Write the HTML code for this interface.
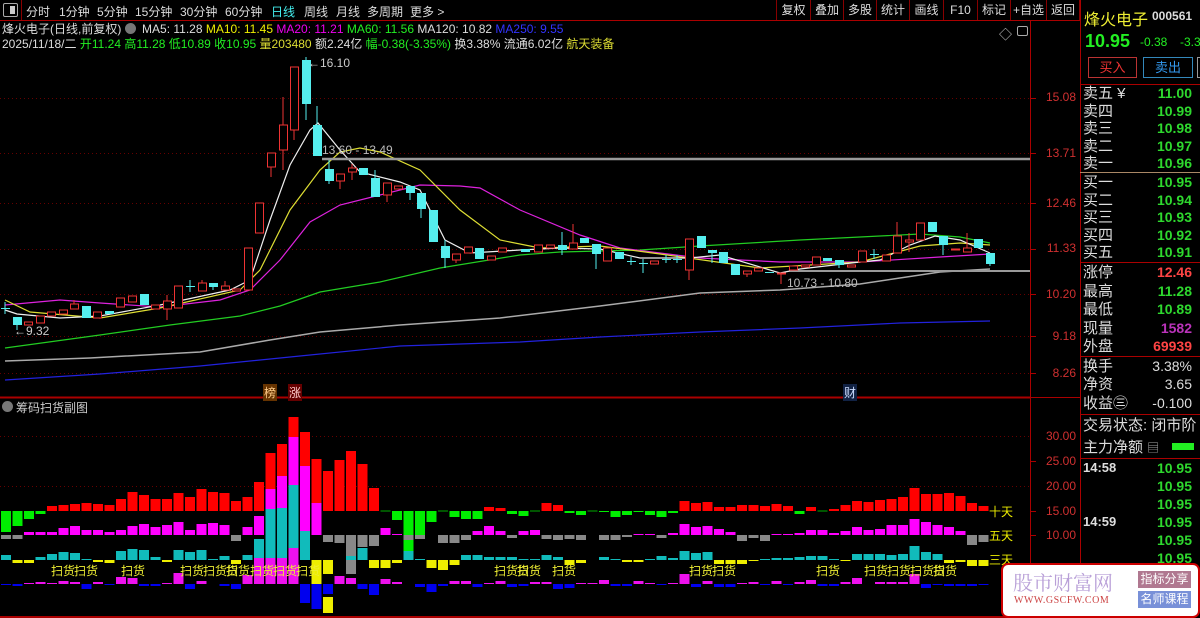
<!DOCTYPE html>
<html><head><meta charset="utf-8">
<style>
*{margin:0;padding:0;box-sizing:border-box}
body{width:1200px;height:618px;background:#000;overflow:hidden;position:relative;font-family:"Liberation Sans","Noto Sans CJK SC",sans-serif;color:#ddd}
.a{position:absolute;white-space:nowrap}
.tb{font-size:12px;color:#ddd;top:3px}
.rb{position:absolute;top:0;height:20px;border-left:1px solid #800;font-size:12px;color:#ddd;text-align:center;line-height:21px}
.rl{position:absolute;left:1083px;font-size:15px;color:#ddd;line-height:17px}
.rv{position:absolute;right:8px;font-size:14px;font-weight:bold;color:#2ed82e;line-height:17px;font-family:"Liberation Sans",sans-serif}
.ax{position:absolute;left:1040px;font-size:12px;color:#d03030;width:36px;text-align:right}
</style></head><body>
<svg id="s" width="1200" height="618" style="position:absolute;left:0;top:0"></svg>

<div class="a" style="left:3px;top:3px;width:15px;height:14px;border:1px solid #aaa;border-radius:2px"></div>
<div class="a" style="left:10px;top:6px;width:5px;height:8px;background:#ccc"></div>
<div class="a" style="left:21px;top:0;width:1px;height:20px;background:#800"></div>
<div class="a tb" style="left:26px">分时</div>
<div class="a tb" style="left:59px">1分钟</div>
<div class="a tb" style="left:97px">5分钟</div>
<div class="a tb" style="left:135px">15分钟</div>
<div class="a tb" style="left:180px">30分钟</div>
<div class="a tb" style="left:225px">60分钟</div>
<div class="a tb" style="left:271px;color:#4ee">日线</div>
<div class="a tb" style="left:304px">周线</div>
<div class="a tb" style="left:336px">月线</div>
<div class="a tb" style="left:367px">多周期</div>
<div class="a tb" style="left:410px">更多 &gt;</div>
<div class="rb" style="left:776px;width:34px">复权</div>
<div class="rb" style="left:810px;width:33px">叠加</div>
<div class="rb" style="left:843px;width:33px">多股</div>
<div class="rb" style="left:876px;width:33px">统计</div>
<div class="rb" style="left:909px;width:34px">画线</div>
<div class="rb" style="left:943px;width:34px">F10</div>
<div class="rb" style="left:977px;width:33px">标记</div>
<div class="rb" style="left:1010px;width:36px">+自选</div>
<div class="rb" style="left:1046px;width:34px;border-right:1px solid #800">返回</div>

<div class="a" style="left:2px;top:22px;font-size:12px;line-height:15px">
<span style="color:#ddd">烽火电子(日线,前复权)</span> <span style="display:inline-block;width:11px;height:11px;border-radius:6px;background:#777;vertical-align:-1px"></span>
<span style="color:#ddd;margin-left:3px">MA5: 11.28</span> <span style="color:#ee0">MA10: 11.45</span> <span style="color:#e0e">MA20: 11.21</span> <span style="color:#2e2">MA60: 11.56</span> <span style="color:#ddd">MA120: 10.82</span> <span style="color:#33f">MA250: 9.55</span></div>
<div class="a" style="left:2px;top:37px;font-size:12px;line-height:15px">
<span style="color:#ddd">2025/11/18/二</span> <span style="color:#2e2">开11.24 高11.28 低10.89 收10.95</span> <span style="color:#dd3">量203480</span> <span style="color:#ddd">额2.24亿</span> <span style="color:#2e2">幅-0.38(-3.35%)</span> <span style="color:#ddd">换3.38% 流通6.02亿</span> <span style="color:#dd3">航天装备</span></div>
<div class="a" style="left:999px;top:24px;font-size:13px;color:#ccc">◇</div>
<div class="a" style="left:1017px;top:26px;width:11px;height:10px;border:1px solid #aaa;border-radius:2px"></div>

<div class="a" style="left:322px;top:143px;font-size:12px;color:#bbb">13.60 - 13.49</div>
<div class="a" style="left:787px;top:276px;font-size:12px;color:#bbb">10.73 - 10.80</div>
<div class="a" style="left:308px;top:56px;font-size:12px;color:#ccc">←16.10</div>
<div class="a" style="left:14px;top:324px;font-size:12px;color:#ccc">←9.32</div>
<div class="a" style="left:263px;top:384px;font-size:12px;color:#fc8;background:#630;padding:0 1px">榜</div>
<div class="a" style="left:288px;top:384px;font-size:12px;color:#fcc;background:#600;padding:0 1px">涨</div>
<div class="a" style="left:843px;top:384px;font-size:12px;color:#cdf;background:#124;padding:0 1px">财</div>

<div class="ax" style="top:90px">15.08</div>
<div class="ax" style="top:146px">13.71</div>
<div class="ax" style="top:196px">12.46</div>
<div class="ax" style="top:241px">11.33</div>
<div class="ax" style="top:287px">10.20</div>
<div class="ax" style="top:329px">9.18</div>
<div class="ax" style="top:366px">8.26</div>
<div class="ax" style="top:429px">30.00</div>
<div class="ax" style="top:454px">25.00</div>
<div class="ax" style="top:479px">20.00</div>
<div class="ax" style="top:504px">15.00</div>
<div class="ax" style="top:528px">10.00</div>

<div class="a" style="left:2px;top:401px;width:11px;height:11px;border-radius:6px;background:#777"></div>
<div class="a" style="left:16px;top:399px;font-size:12px;color:#ccc">筹码扫货副图</div>
<div class="a" style="left:989px;top:503px;font-size:12px;color:#ee0">十天</div>
<div class="a" style="left:989px;top:527px;font-size:12px;color:#ee0">五天</div>
<div class="a" style="left:989px;top:551px;font-size:12px;color:#ee0">三天</div>

<div id="lab"></div>

<div class="a" style="left:1084px;top:6px;font-size:16px;color:#ee3">烽火电子</div>
<div class="a" style="left:1152px;top:9px;font-size:12px;color:#ddd;font-weight:bold">000561</div>
<div class="a" style="left:1085px;top:31px;font-size:18px;color:#2e2;font-weight:bold">10.95</div>
<div class="a" style="left:1140px;top:35px;font-size:12px;color:#2e2">-0.38</div>
<div class="a" style="left:1180px;top:35px;font-size:12px;color:#2e2">-3.3</div>
<div class="a" style="left:1088px;top:57px;width:49px;height:21px;border:1px solid #b33;color:#e33;font-size:13px;text-align:center;line-height:19px">买入</div>
<div class="a" style="left:1143px;top:57px;width:50px;height:21px;border:1px solid #38b;color:#39e;font-size:13px;text-align:center;line-height:19px">卖出</div>
<div class="a" style="left:1197px;top:57px;width:5px;height:21px;border:1px solid #999"></div>

<div class="rl" style="top:85px">卖五 ¥</div><div class="rv" style="top:85px">11.00</div>
<div class="rl" style="top:103px">卖四</div><div class="rv" style="top:103px">10.99</div>
<div class="rl" style="top:120px">卖三</div><div class="rv" style="top:120px">10.98</div>
<div class="rl" style="top:138px">卖二</div><div class="rv" style="top:138px">10.97</div>
<div class="rl" style="top:155px">卖一</div><div class="rv" style="top:155px">10.96</div>
<div class="rl" style="top:174px">买一</div><div class="rv" style="top:174px">10.95</div>
<div class="rl" style="top:192px">买二</div><div class="rv" style="top:192px">10.94</div>
<div class="rl" style="top:209px">买三</div><div class="rv" style="top:209px">10.93</div>
<div class="rl" style="top:227px">买四</div><div class="rv" style="top:227px">10.92</div>
<div class="rl" style="top:244px">买五</div><div class="rv" style="top:244px">10.91</div>
<div class="rl" style="top:264px">涨停</div><div class="rv" style="top:264px;color:#f44">12.46</div>
<div class="rl" style="top:283px">最高</div><div class="rv" style="top:283px">11.28</div>
<div class="rl" style="top:301px">最低</div><div class="rv" style="top:301px">10.89</div>
<div class="rl" style="top:320px">现量</div><div class="rv" style="top:320px;color:#b3b">1582</div>
<div class="rl" style="top:338px">外盘</div><div class="rv" style="top:338px;color:#f44">69939</div>
<div class="rl" style="top:358px">换手</div><div class="rv" style="top:358px;color:#ddd;font-weight:normal">3.38%</div>
<div class="rl" style="top:376px">净资</div><div class="rv" style="top:376px;color:#ddd;font-weight:normal">3.65</div>
<div class="rl" style="top:395px">收益㊂</div><div class="rv" style="top:395px;color:#ddd;font-weight:normal">-0.100</div>
<div class="rl" style="top:417px">交易状态: 闭市阶</div>
<div class="rl" style="top:439px">主力净额 <span style="font-size:12px;color:#aaa">▤</span></div>
<div class="a" style="left:1172px;top:443px;width:22px;height:7px;background:#2e2"></div>
<div class="a" style="left:1083px;top:460px;font-size:13px;font-weight:bold;color:#ddd">14:58</div>
<div class="a" style="left:1083px;top:514px;font-size:13px;font-weight:bold;color:#ddd">14:59</div>
<div class="rv" style="top:460px">10.95</div><div class="rv" style="top:478px">10.95</div><div class="rv" style="top:496px">10.95</div>
<div class="rv" style="top:514px">10.95</div><div class="rv" style="top:532px">10.95</div><div class="rv" style="top:550px">10.95</div>

<div class="a" style="left:1001px;top:563px;width:199px;height:55px;background:#fff;border:2px solid #c00;border-radius:7px"></div>
<div class="a" style="left:1013px;top:567px;font-size:20px;color:#b9a0d8;font-family:'Noto Serif CJK SC',serif">股市财富网</div>
<div class="a" style="left:1014px;top:595px;font-size:10px;color:#c44;font-family:'Liberation Serif',serif;letter-spacing:0.5px">WWW.GSCFW.COM</div>
<div class="a" style="left:1138px;top:571px;width:53px;height:17px;background:#b07890;color:#fff;font-size:12px;text-align:center;line-height:17px">指标分享</div>
<div class="a" style="left:1138px;top:591px;width:53px;height:17px;background:#7890d8;color:#fff;font-size:12px;text-align:center;line-height:17px">名师课程</div>

<script>
var s=document.getElementById('s'),h='';
function R(x,y,w,hh,f,st){if(hh<0){y+=hh;hh=-hh}h+='<rect x="'+x+'" y="'+y+'" width="'+w+'" height="'+hh+'" fill="'+f+'"'+(st?' stroke="'+st+'"':'')+'/>';}
function L(x1,y1,x2,y2,c,w,d){h+='<line x1="'+x1+'" y1="'+y1+'" x2="'+x2+'" y2="'+y2+'" stroke="'+c+'" stroke-width="'+(w||1)+'"'+(d?' stroke-dasharray="'+d+'"':'')+'/>';}
function P(pts,c,w){h+='<polyline fill="none" stroke="'+c+'" stroke-width="'+(w||1.2)+'" points="'+pts.map(function(p){return p.join(',')}).join(' ')+'"/>';}
L(0,20.5,1080,20.5,'#a00');L(1030.5,20,1030.5,618,'#a00');L(1080.5,0,1080.5,618,'#a00');
L(0,397.5,1030,397.5,'#a00',2);L(1030,397.5,1080,397.5,'#a00');L(0,617,1030,617,'#a00',2);
[84,172,262,356,414,458].forEach(function(y){L(1080,y+.5,1200,y+.5,y==172?'#a86':'#a00')});
[98,153,203,249,294,336,373].forEach(function(y){L(0,y+.5,1030,y+.5,'#600',1,'1,3');L(1030,y+.5,1036,y+.5,'#a00')});
[436,486].forEach(function(y){L(0,y+.5,1030,y+.5,'#600',1,'1,3')});
[461,511,535].forEach(function(y){L(1030,y+.5,1036,y+.5,'#a00')});
P([[5,380],[100,374],[200,366],[300,356],[400,346],[520,342],[600,337],[700,332],[800,328],[900,323],[990,321]],'#22d');
P([[5,361],[90,358],[200,352],[270,340],[320,332],[400,325],[500,318],[600,306],[700,293],[780,290],[860,284],[940,272],[990,269]],'#aaa',1.5);
P([[5,348],[100,335],[170,325],[240,316],[280,306],[320,292],[380,282],[440,268],[520,255],[560,252],[640,250],[700,246],[800,240],[920,234],[960,237],[990,243]],'#2c2');
P([[5,305],[60,300],[100,303],[160,307],[220,300],[250,290],[280,260],[310,222],[340,205],[380,195],[420,185],[460,186],[480,188],[520,210],[580,235],[620,248],[700,258],[780,262],[860,262],[940,257],[990,254]],'#d2d');
P([[5,300],[30,312],[100,318],[160,308],[240,290],[260,270],[290,210],[320,170],[340,152],[360,148],[380,152],[420,170],[460,210],[500,240],[540,248],[600,246],[660,254],[760,268],[860,262],[920,246],[960,243],[990,245]],'#dd3');
P([[5,310],[17,314],[60,318],[100,316],[160,305],[230,290],[250,280],[270,220],[290,165],[310,130],[318,123],[340,150],[360,172],[400,182],[420,190],[445,240],[470,253],[520,250],[560,248],[600,249],[640,258],[690,258],[720,255],[780,273],[800,269],[860,262],[880,260],[910,245],[935,236],[960,240],[990,253]],'#eee');
L(322,159,1030,159,'#999',2.5);L(790,271,1030,271,'#999',2);
var C=[[5,308,308,302,314,0],[17,317,325,317,330,0],[28,322,325,,,1],[40,316,323,,,1],[51,312,316,,,1],[63,310,314,,,1],[74,304,309,300,,1],[86,306,318,,,0],[97,312,318,,,1],[109,311,314,,,0],[120,298,307,,,1],[132,296,302,,,1],[144,294,305,,,0],[155,305,309,,,1],[167,301,309,295,320,1],[178,286,308,,,1],[190,286,286,280,292,0],[202,283,291,280,,1],[213,283,287,,290,0],[225,286,290,281,,1],[236,289,291,,,1],[248,248,290,,,1],[259,203,233,,,1],[271,153,167,,177,1],[283,125,150,97,170,1],[294,67,130,,140,1],[306,60,104,57,120,0],[317,125,156,106,,0],[329,169,181,160,184,0],[340,174,181,,189,1],[352,168,172,164,180,1],[363,168,175,,,0],[375,178,197,170,,0],[387,183,195,,202,1],[398,186,189,,,1],[410,186,193,,200,0],[421,193,209,,218,0],[433,210,242,,,0],[445,246,258,240,268,0],[456,254,260,,263,1],[468,247,253,,,1],[479,248,259,,,0],[491,256,260,,,1],[502,248,252,,,1],
[525,249,252,,,0],[538,245,252,,,1],[550,245,248,,,1],[562,245,250,232,255,0],[573,243,249,224,,1],[584,238,243,,,0],[596,244,254,,269,0],[607,248,261,,,1],[619,252,259,,,0],[631,261,261,257,265,0],[643,263,263,259,273,0],[654,261,264,,,1],[666,259,259,255,263,0],[677,259,259,255,263,0],[689,239,270,,280,1],[701,236,248,,,0],[712,250,253,,263,0],[723,252,263,,,0],[735,264,275,,,0],[747,271,274,,277,1],[758,268,271,,,1],[769,272,272,,,0],[781,273,274,,284,1],[793,266,270,,,1],[805,265,267,,,1],[816,257,265,,,1],[827,258,261,,,0],[839,260,265,,268,0],[851,265,267,,,1],[862,251,262,,,1],[874,254,254,249,259,0],[886,255,261,,,1],[897,236,253,222,,1],[909,240,242,233,252,1],[920,223,240,,,1],[932,222,232,,,0],[943,236,245,,255,0],[955,249,250,,,1],[967,248,252,233,,1],[978,239,248,,,0],[990,253,264,,266,0]];
C.forEach(function(c){var x=c[0],t=c[1],b=c[2],hi=c[3]||t,lo=c[4]||b,up=c[5],col=up?'#e33':'#5ee';
L(x,hi,x,lo,col);if(b-t<1){L(x-4,t+.5,x+5,t+.5,col);}else if(up){h+='<rect x="'+(x-3.5)+'" y="'+t+'" width="8" height="'+(b-t)+'" fill="#000" stroke="'+col+'"/>';}else R(x-4,t,9,b-t,col);});
var T=[-21,-15,-8,-3,5,6,7,8,7,6,12,19,16,12,12,18,14,22,19,18,10,14,29,58,67,94,79,52,40,51,60,47,23,0,-9,-40,-26,-11,0,-6,-8,-8,4,3,-3,-5,0,8,6,-2,-4,0,-1,-6,-4,-1,-4,-6,-2,10,8,9,4,4,6,6,5,7,5,-3,4,0,2,6,10,9,11,12,14,23,17,17,18,15,8,5];
var F=[-4,-4,3,3,3,7,9,5,5,3,5,9,11,8,10,13,5,11,12,10,-6,8,19,46,59,98,69,32,-7,-8,-39,-12,-11,7,1,-5,-4,0,-8,-8,-5,4,9,4,-3,4,5,-4,-5,-4,-5,0,-5,-5,-2,1,1,-3,2,11,8,9,6,3,-6,-3,-6,1,1,2,5,5,2,4,8,5,6,10,10,16,13,10,8,4,-10,-7];
var H=[5,-3,-3,3,6,8,7,1,-2,-3,9,11,10,3,-2,10,8,10,1,4,-4,5,21,51,52,75,29,-24,-14,0,4,12,-8,-8,-3,9,1,-8,-10,-5,5,5,3,3,3,1,1,5,3,-5,-3,0,3,1,-2,-2,1,4,2,9,7,8,-4,-4,-4,-1,1,2,2,3,4,4,1,-1,6,6,6,5,6,14,8,6,-3,-2,-6,-6];
var O=[-1,-2,1,2,1,3,2,-5,2,-1,7,6,-2,-2,1,11,-5,3,0,-2,-5,9,26,26,26,36,-19,-25,-10,8,6,-5,-11,5,2,0,-3,-8,-2,3,3,-3,1,3,-3,-2,2,2,-5,-4,1,1,4,-2,-2,3,1,-1,1,10,-3,3,-3,-3,1,2,-1,3,-1,2,4,-2,-2,2,6,0,2,2,2,10,-4,-1,-2,-2,-2,-1];
for(var i=0;i<86;i++){var x=1+i*11.5;
 if(T[i])R(x,511,10,-T[i],T[i]>0?'#f00':'#0e0');else L(x,511,x+10,511,'#0a0');
 if(F[i])R(x,535,10,-F[i],F[i]>0?'#f0f':'#888');
 if(H[i])R(x,560,10,-H[i],H[i]>0?'#1bb':'#ee0');
 if(O[i])R(x,584,10,-O[i],O[i]>0?'#e1e':'#00e');}
R(323,597,10,16,'#ee0');
s.innerHTML=h;
var G=[[51,4],[121,2],[180,5],[250,6],[494,3],[552,2],[689,4],[816,2],[864,7]],lh='';
G.forEach(function(g){for(var k=0;k<g[1];k+=2){lh+='<div class="a" style="left:'+(g[0]+k*11.5)+'px;top:562px;font-size:12px;color:#ee3">扫货</div>';}
 if(g[1]%2)lh+='<div class="a" style="left:'+(g[0]+(g[1]-1)*11.5)+'px;top:562px;font-size:12px;color:#ee3">货</div>';});
document.getElementById('lab').innerHTML=lh;
</script>
</body></html>
